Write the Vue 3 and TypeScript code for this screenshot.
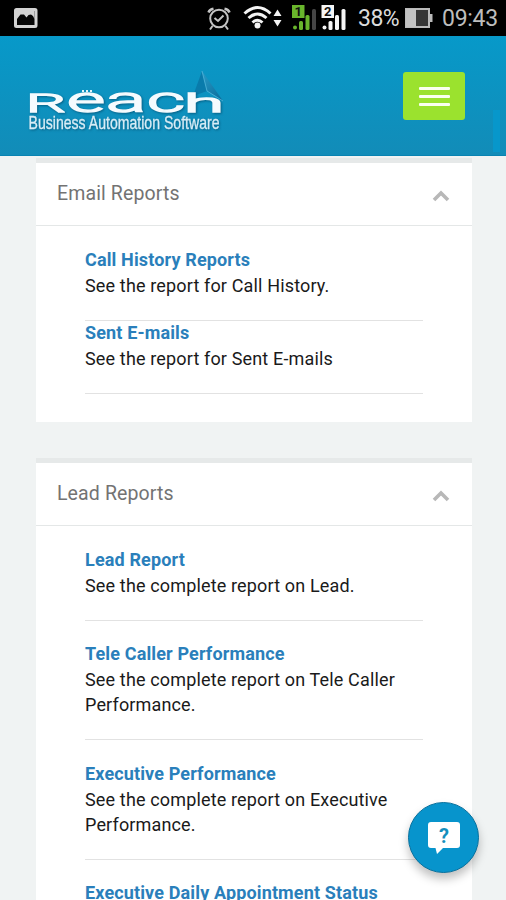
<script setup lang="ts">
interface Report { title: string; lines: string[] }
interface Section { name: string; compact: boolean; reports: Report[] }

const sections: Section[] = [
  {
    name: 'Email Reports',
    compact: true,
    reports: [
      { title: 'Call History Reports', lines: ['See the report for Call History.'] },
      { title: 'Sent E-mails', lines: ['See the report for Sent E-mails'] },
    ],
  },
  {
    name: 'Lead Reports',
    compact: false,
    reports: [
      { title: 'Lead Report', lines: ['See the complete report on Lead.'] },
      { title: 'Tele Caller Performance', lines: ['See the complete report on Tele Caller', 'Performance.'] },
      { title: 'Executive Performance', lines: ['See the complete report on Executive', 'Performance.'] },
      { title: 'Executive Daily Appointment Status', lines: [] },
    ],
  },
]
</script>

<template>
  <div class="screen">
    <div class="status">
      <svg class="photo" width="24" height="20" viewBox="0 0 24 20">
        <rect x="1.5" y="1.5" width="20.5" height="17" rx="1" fill="#050505" stroke="#d2d2d2" stroke-width="3" />
        <path d="M3 3H20.500V11L19 8L17 6.500L14.500 7L12.500 9.500L10 6.500H6.500L4.500 9L3 11Z" fill="#d2d2d2" />
      </svg>
      <svg class="indicators" width="152" height="32" viewBox="0 0 152 32">
        <g fill="none" stroke="#c4c4c4" stroke-width="2">
          <circle cx="13" cy="18.500" r="8.800" />
          <path d="M8.500 18L12 21L17.500 15.500M6.500 26L4 29.500M19.500 26L22 29.500" />
          <path d="M2.500 12.500Q3.500 9.500 7.500 8.800M23.500 12.500Q22.500 9.500 18.500 8.800" stroke-width="2.500" />
        </g>
        <g fill="none" stroke="#f4f4f4" stroke-width="3">
          <path d="M38.500 13.500Q51.500 1.500 64.500 13.500M42.500 18Q51.500 10 60.500 18M46.500 22.500Q51.500 18 56.500 22.500" />
        </g>
        <circle cx="51.500" cy="25.500" r="3" fill="#f4f4f4" />
        <path d="M67.500 16L71.500 9.500L75.500 16ZM67.500 20H75.500L71.500 26.500Z" fill="#f4f4f4" />
        <rect x="86" y="5" width="12.500" height="13" fill="#69b52c" />
        <g fill="#69b52c"><circle cx="89" cy="27.500" r="2" /><rect x="93" y="21" width="4" height="9" rx="1.500" /><rect x="99.500" y="15" width="4" height="15" rx="1.500" /></g>
        <rect x="106" y="9" width="4" height="21" rx="1.500" fill="#454545" />
        <rect x="115.500" y="5" width="12.500" height="13" fill="#f6f6f6" />
        <g fill="#f6f6f6"><circle cx="118.500" cy="27.500" r="2" /><rect x="122.500" y="21" width="4" height="9" rx="1.500" /><rect x="129" y="15" width="4" height="15" rx="1.500" /><rect x="135.500" y="9" width="4" height="21" rx="1.500" /></g>
        <text class="sim" x="92.200" y="16">1</text>
        <text class="sim" x="121.700" y="16">2</text>
      </svg>
      <span class="percent">38%</span>
      <svg class="battery" width="28" height="20" viewBox="0 0 28 20">
        <rect x="1" y="1" width="23" height="18" fill="#363636" stroke="#bababa" stroke-width="2" />
        <rect x="1" y="1" width="10" height="18" fill="#c2c2c2" />
        <rect x="25" y="6" width="2.500" height="8" fill="#bababa" />
      </svg>
      <span class="time">09:43</span>
    </div>

    <header class="bar">
      <svg class="logo" width="206" height="72" viewBox="0 0 206 72">
        <defs>
          <linearGradient id="fin" x1="0" y1="0" x2="1" y2="1">
            <stop offset="0" stop-color="#30a4d0" /><stop offset="1" stop-color="#086b9a" />
          </linearGradient>
        </defs>
        <path d="M182 5L203 35L187 25L173 30Q180 19 182 5Z" fill="url(#fin)" />
        <path d="M182 5L187 25L173 30Z" fill="#097bab" />
        <path d="M182 5L187 25L203 35" fill="none" stroke="#54b7dc" stroke-width=".8" />
        <text class="word" y="45.500"><tspan class="cap" x="6" textLength="40" lengthAdjust="spacingAndGlyphs">R</tspan><tspan x="47" textLength="38" lengthAdjust="spacingAndGlyphs">e</tspan><tspan x="86" textLength="40" lengthAdjust="spacingAndGlyphs">a</tspan><tspan x="127" textLength="38" lengthAdjust="spacingAndGlyphs">c</tspan><tspan class="cap" x="164" textLength="40" lengthAdjust="spacingAndGlyphs">h</tspan></text>
        <path d="M62 25H64M66 25H68M70 25H72" stroke="#e4f4fa" stroke-width="2" />
        <text class="tagline" x="8.500" y="63" textLength="191" lengthAdjust="spacingAndGlyphs">Business Automation Software</text>
      </svg>
      <button class="menu" aria-label="Menu"><i></i><i></i><i></i></button>
      <span class="scroll"></span>
    </header>

    <main class="content">
      <section v-for="s in sections" :key="s.name" class="card" :class="{ compact: s.compact }">
        <div class="head">
          <h2>{{ s.name }}</h2>
          <svg width="18" height="12" viewBox="0 0 18 12"><path d="M2 10L9 3L16 10" fill="none" stroke="#b8b8b8" stroke-width="3.600" /></svg>
        </div>
        <div class="list">
          <article v-for="r in s.reports" :key="r.title" class="item">
            <a class="title">{{ r.title }}</a>
            <p v-for="l in r.lines" :key="l">{{ l }}</p>
          </article>
        </div>
      </section>
    </main>

    <button class="help" aria-label="Help">
      <svg width="34" height="34" viewBox="0 0 34 34">
        <path d="M4 1H30Q33 1 33 4V24Q33 27 30 27H16L10 33L8.500 27H4Q1 27 1 24V4Q1 1 4 1Z" fill="#fff" />
        <text class="q" x="17" y="21.500">?</text>
      </svg>
    </button>
  </div>
</template>

<style>
body { margin: 0; }
</style>

<style scoped>
.screen { position: relative; width: 506px; height: 900px; overflow: hidden; background: #f0f3f3; font-family: Roboto, "Liberation Sans", sans-serif; display: flex; flex-direction: column; }
.status { flex: none; height: 36px; background: #000; display: flex; align-items: flex-start; box-sizing: border-box; padding-left: 14px; }
.photo { margin-top: 8px; flex: none; }
.indicators { margin-left: 168px; flex: none; }
.sim { font: bold 13px Roboto, sans-serif; text-anchor: middle; fill: #111; }
.percent { color: #dcdcdc; font-size: 23px; line-height: 37px; width: 47px; flex: none; white-space: nowrap; letter-spacing: -.5px; }
.battery { margin-top: 8px; flex: none; }
.time { color: #bdbdbd; font-size: 23px; line-height: 37px; margin-left: 9px; white-space: nowrap; letter-spacing: -.3px; }
.bar { flex: none; height: 120px; box-sizing: border-box; background: linear-gradient(#0799c9, #128cb8); border-bottom: 1px solid #0883b2; display: flex; align-items: flex-start; padding-left: 20px; }
.logo { margin-top: 30px; flex: none; }
.word { font: 300 34.5px Roboto, sans-serif; fill: #f5fbfe; stroke: #f5fbfe; stroke-width: 1.4px; filter: drop-shadow(1px 1px 1px rgba(0, 55, 85, .55)); }
.cap { font-size: 26.5px; }
.tagline { font: 18.5px "Liberation Sans", sans-serif; fill: #d8edf6; stroke: #d8edf6; stroke-width: .3px; filter: drop-shadow(1px 1px 1px rgba(0, 55, 85, .5)); }
.menu { margin: 36px 0 0 177px; width: 62px; height: 48px; border: 0; border-radius: 3px; padding: 0; background: #9be22e; display: flex; flex-direction: column; align-items: center; justify-content: center; gap: 5px; }
.menu i { width: 31px; height: 3px; background: #faffef; border-radius: 1px; }
.scroll { width: 7px; height: 42px; margin: 74px 0 0 28px; background: #0797cb; }
.content { width: 436px; margin-left: 36px; padding-top: 2px; }
.card { background: #fff; border-top: 5px solid #e6e9e9; height: 500px; }
.card.compact { height: 259px; margin-bottom: 36px; }
.head { height: 62px; border-bottom: 1px solid #e4e7e7; padding: 0 22px 0 21px; display: flex; align-items: center; justify-content: space-between; }
.head h2 { margin: 0; font-weight: 400; font-size: 19.5px; line-height: 28px; color: #737373; letter-spacing: .12px; }
.head svg { margin-top: 3px; }
.list { padding: 21px 49px 0; }
.item { border-bottom: 1px solid #e2e2e2; padding-bottom: 21.500px; margin-bottom: 20.500px; line-height: 25.400px; font-size: 18px; white-space: nowrap; }
.compact .item { margin-bottom: -.3px; }
.title { display: block; color: #2a7fbb; font-weight: 700; letter-spacing: .14px; line-height: 25.8px; }
.item p { margin: 0; color: #1a1a1a; letter-spacing: .15px; }
.help { position: absolute; left: 408px; top: 802px; width: 71px; height: 71px; border-radius: 50%; border: 1px solid #08719e; padding: 0; background: #0794cc; box-shadow: 0 6px 10px rgba(0, 0, 0, .25); display: flex; align-items: center; justify-content: center; }
.q { font: 700 20px Roboto, sans-serif; fill: #148fbd; text-anchor: middle; }
</style>
